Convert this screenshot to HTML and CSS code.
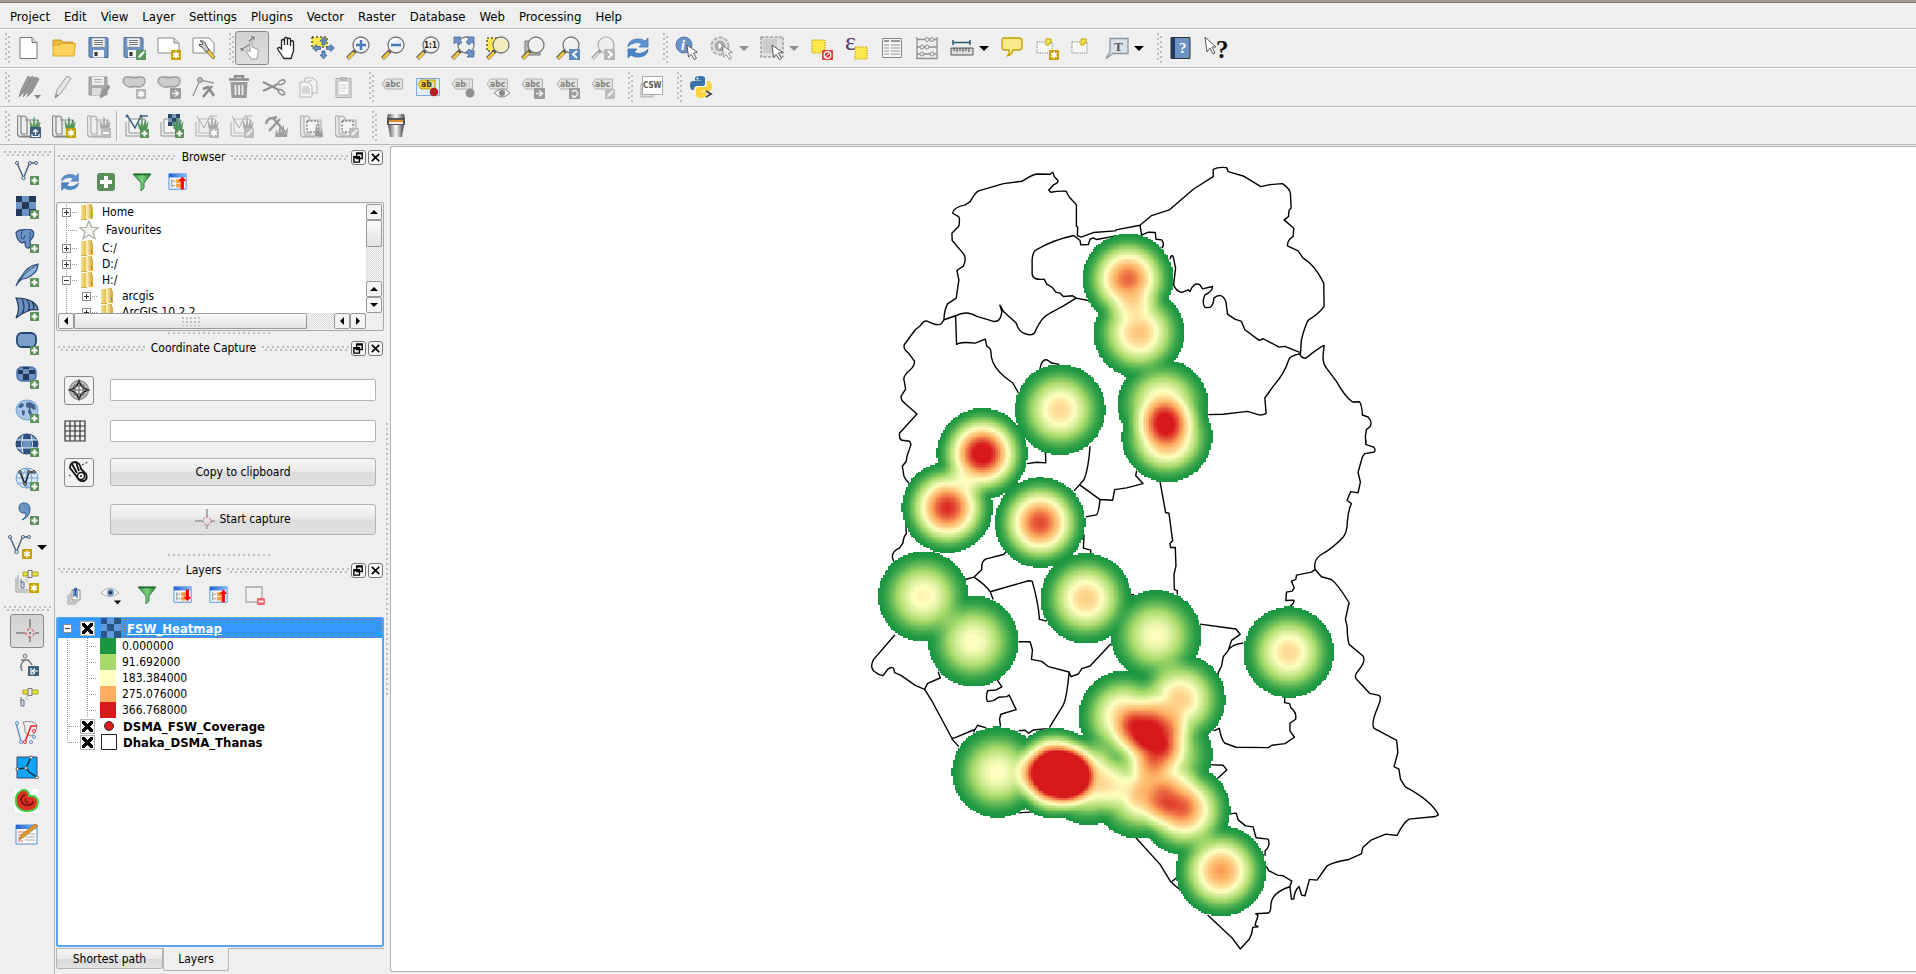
FILE: index.html
```html
<!DOCTYPE html>
<html lang="en">
<head>
  <meta charset="UTF-8" />
  <meta name="viewport" content="width=device-width, initial-scale=1.0" />
  <title>Dhaka DSMA Heatmap</title>
  <link rel="stylesheet" href="styles.css">
</head>
<body>

<!-- Shared icon shapes -->
<svg class="sprite" aria-hidden="true">
  <defs>
    <linearGradient id="gold" x1="0" x2="1"><stop offset="0" stop-color="#f5e294"/><stop offset=".45" stop-color="#e0bd4c"/><stop offset=".5" stop-color="#fff3b8"/><stop offset="1" stop-color="#d2a93c"/></linearGradient>
    <linearGradient id="green" x1="0" x2="1"><stop offset="0" stop-color="#2f9a41"/><stop offset=".5" stop-color="#7fd07f"/><stop offset="1" stop-color="#1d7f33"/></linearGradient>
    <linearGradient id="sky" x1="0" x2="1"><stop offset="0" stop-color="#1d5fd6"/><stop offset="1" stop-color="#8fc0f8"/></linearGradient>
    <linearGradient id="steel" x1="0" x2="1"><stop offset="0" stop-color="#555"/><stop offset=".5" stop-color="#fafafa"/><stop offset="1" stop-color="#444"/></linearGradient>
  </defs>
  <!-- badges -->
  <symbol id="b-plus" viewBox="0 0 24 24"><rect x="15" y="15" width="9" height="9" rx="1" fill="#5a8f5a"/><path d="M19.500 16.500v6M16.500 19.500h6" stroke="#fff" stroke-width="2"/></symbol>
  <symbol id="b-star" viewBox="0 0 24 24"><rect x="14" y="14" width="10" height="10" rx="1" fill="#c4a000"/><path d="M19 15.500v7M16 17.200l6 3.600M22 17.200l-6 3.600" stroke="#fff" stroke-width="1.600"/></symbol>
  <symbol id="b-star-off" viewBox="0 0 24 24"><rect x="14" y="14" width="10" height="10" rx="1" fill="#b5b5b5"/><path d="M19 15.500v7M16 17.200l6 3.600M22 17.200l-6 3.600" stroke="#fff" stroke-width="1.600"/></symbol>
  <symbol id="b-pen" viewBox="0 0 24 24"><rect x="14" y="14" width="10" height="10" rx="1" fill="#5a9360"/><path d="M16 22l1-3 5-4 1 1-4 5z" fill="#fff"/></symbol>
  <symbol id="b-pen-off" viewBox="0 0 24 24"><rect x="14" y="14" width="10" height="10" rx="1" fill="#bbb"/><path d="M16 22l1-3 5-4 1 1-4 5z" fill="#eee"/></symbol>
  <symbol id="b-right" viewBox="0 0 24 24"><rect x="13" y="13" width="11" height="11" rx="1" fill="#9b9b9b"/><path d="M15 18.500h6M18 15.500l3.500 3-3.500 3" stroke="#eee" stroke-width="1.600" fill="none"/></symbol>
  <!-- base shapes -->
  <symbol id="lens" viewBox="0 0 24 24"><path d="M10 14L1.500 22.500" stroke="#555" stroke-width="4"/><path d="M8 16.500L2 22.500" stroke="#f5c93c" stroke-width="2.500"/><circle cx="15" cy="9" r="8" fill="#eef0f0" stroke="#777" stroke-width="1.300"/><path d="M10 6a6 6 0 0 1 6-3" stroke="#fff" stroke-width="2" fill="none"/></symbol>
  <symbol id="lens-off" viewBox="0 0 24 24"><path d="M10 14L1.500 22.500" stroke="#999" stroke-width="3.500"/><path d="M8 16.500L2 22.500" stroke="#ddd" stroke-width="2"/><circle cx="15" cy="9" r="8" fill="#eee" stroke="#aaa" stroke-width="1.200"/></symbol>
  <symbol id="cursor" viewBox="0 0 24 24"><path d="M12 9l1.500 12 2.800-2.600 3 5.100 2.200-1.300-3-5 3.800-1z" fill="#fff" stroke="#555" stroke-width="1"/></symbol>
  <symbol id="floppy" viewBox="0 0 24 24"><path d="M2 1.500h18l1 1v19h-18l-1-1z" fill="#6c93c4" stroke="#4a6a96"/><path d="M5 2h13v9h-13z" fill="#f1f1ee" stroke="#999" stroke-width=".600"/><path d="M7 4.500h9M7 6.500h9M7 8.500h9" stroke="#777"/><path d="M6 14h11v7.500h-11z" fill="#f3f3f3"/><path d="M7.500 16h3v4h-3z" fill="#333"/></symbol>
  <symbol id="refresh" viewBox="0 0 24 24"><path d="M2 11q0-7 9-8 5-.500 8 2l3-3v9h-9l3-3q-4-3-8-1-4 1-6 4z" fill="#5d92d0" stroke="#3f73b4" stroke-width=".800"/><path d="M22 13q0 7-9 8-5 .500-8-2l-3 3v-9h9l-3 3q4 3 8 1 4-1 6-4z" fill="#4c84c5" stroke="#3f73b4" stroke-width=".800"/></symbol>
  <symbol id="tag" viewBox="0 0 24 24"><path d="M1 9l3.500-5h17v10h-17z" fill="#e2e2de" stroke="#b0b0b0"/><text x="4" y="12" font-size="8.500" font-weight="bold" fill="#808080">abc</text></symbol>
  <symbol id="vector" viewBox="0 0 24 24"><path d="M2 2l6.500 15 6-15h6" fill="none" stroke="#46627c" stroke-width="1.400"/><g fill="#e8f0f8" stroke="#46627c"><circle cx="2" cy="2" r="1.500"/><circle cx="8.500" cy="17" r="1.700"/><circle cx="15" cy="2" r="1.500"/><circle cx="21" cy="2" r="1.500"/></g></symbol>
  <symbol id="grass" viewBox="0 0 24 24"><path d="M14 15L13 7l3 6 1-10 1 10 3-7-1 7 3-5-1 7z" fill="#4f9a56" stroke="#3d8046" stroke-width=".500"/></symbol>
  <symbol id="grass-off" viewBox="0 0 24 24"><path d="M14 15L13 7l3 6 1-10 1 10 3-7-1 7 3-5-1 7z" fill="#aaa" stroke="#999" stroke-width=".500"/></symbol>
  <symbol id="scroll" viewBox="0 0 24 24"><path d="M4 3q-2.500-3-3.500 0v17q1 3 3.500 3h17v-17h-13M4 3q.500-1 3-1t3 3v15H6q-2 0-2-2zM4 22h11" fill="#e9e9e9" stroke="#858585" stroke-width="1.200"/></symbol>
  <symbol id="scroll-off" viewBox="0 0 24 24"><path d="M4 3q-2.500-3-3.500 0v17q1 3 3.500 3h17v-17h-13M4 3q.500-1 3-1t3 3v15H6q-2 0-2-2zM4 22h11" fill="#e9e9e9" stroke="#b0b0b0" stroke-width="1.200"/></symbol>
  <symbol id="sheets" viewBox="0 0 24 24"><path d="M4 5h16v14h-16z" fill="#f4f4f4" stroke="#8f8f8f"/><path d="M1 8v14h15" fill="none" stroke="#8f8f8f"/></symbol>
  <symbol id="sheets-off" viewBox="0 0 24 24"><path d="M4 5h16v14h-16z" fill="#eee" stroke="#bbb"/><path d="M1 8v14h15M2 2l7 12 6-12h7" fill="none" stroke="#aaa"/></symbol>
  <symbol id="raster" viewBox="0 0 24 24"><path d="M1 1h20v20h-20z" fill="#6c93c4"/><path d="M1 1h6v6h-6zM14 1h7v6h-7zM7 7h7v7h-7zM1 14h6v7h-6zM14 14h7v7h-7z" fill="#24395a"/></symbol>
  <symbol id="folder" viewBox="0 0 16 16"><path d="M2 1h5v14h-5zM7 0h6v15h-6z" fill="url(#gold)"/><path d="M13 3h1v12h-6v1h-6v-1h11z" fill="#d5ae45"/><path d="M12 9h1v4h-1z" fill="#4aa0e6"/></symbol>
  <symbol id="funnel" viewBox="0 0 20 20"><path d="M1 2h18l-7 9v5l-3 3v-8z" fill="url(#green)" stroke="#2c8340"/><path d="M2 2.500h16" stroke="#22662c" stroke-width="1.500"/></symbol>
  <symbol id="treewin" viewBox="0 0 22 20"><path d="M1 1h19v17h-19z" fill="#f6f6f6" stroke="#4c8ae0"/><path d="M1 1h19v4h-19z" fill="url(#sky)"/><path d="M4 7v9M4 9h4M4 14h4" stroke="#aaa" stroke-width="1.500"/><path d="M9 7h5v4h-5zM9 12h5v4h-5z" fill="#f39a3c"/></symbol>
  <symbol id="up-red" viewBox="0 0 22 20"><path d="M16 4l4 5h-2.500v9h-3.500v-9h-2.500z" fill="#f00"/></symbol>
  <symbol id="down-red" viewBox="0 0 22 20"><path d="M16 17l4-5h-2.500v-8h-3.500v8h-2.500z" fill="#f00"/></symbol>
  <symbol id="globe" viewBox="0 0 24 24"><ellipse cx="12" cy="11" rx="11" ry="10" fill="#dce9f8" stroke="#6f9fd4"/><path d="M1 11h22M3 6h18M3 16h18M12 1v20M12 1q-10 10 0 20M12 1q10 10 0 20" fill="none" stroke="#6f9fd4"/></symbol>
  <symbol id="sat" viewBox="0 0 24 24"><path d="M8 3h15v4h-15z" fill="#e8e337" stroke="#a8a22a"/><path d="M13 1.500h4v7h-4z" fill="#eee" stroke="#777"/><path d="M6 13h3v6h-3zM6 10v4" fill="#dde" stroke="#5b6f85"/><path d="M10 10q1 3 4 3M11 8q1 2 3 2" fill="none" stroke="#bbb"/></symbol>
  <symbol id="pin" viewBox="0 0 24 24"><path d="M2 6h15v11h-15z" fill="#f8f8f4" stroke="#666" stroke-dasharray="1 1.300"/><path d="M11 3h5v4h-2v2h-3z" fill="#fce94f" stroke="#c4a000"/></symbol>
  <symbol id="float" viewBox="0 0 14 14"><path d="M5 2h6v6h-6zM5 3h6M2 6h6v6h-6zM2 7h6" fill="#f4f4f4" stroke="#000" stroke-width="1.500"/></symbol>
  <symbol id="close" viewBox="0 0 14 14"><path d="M3 3l8 8M11 3l-8 8" stroke="#000" stroke-width="1.800"/></symbol>
</svg>

<div class="window">
  <div class="title-strip"></div>

  <nav class="menu-bar">
    <a href="#">Project</a>
    <a href="#">Edit</a>
    <a href="#">View</a>
    <a href="#">Layer</a>
    <a href="#">Settings</a>
    <a href="#">Plugins</a>
    <a href="#">Vector</a>
    <a href="#">Raster</a>
    <a href="#">Database</a>
    <a href="#">Web</a>
    <a href="#">Processing</a>
    <a href="#">Help</a>
  </nav>

  <div class="tool-row">
    <span class="grip"></span>
    <button class="tool" title="New"><svg viewBox="0 0 24 24"><path d="M3 1.500h12l5 5v16h-17z" fill="#fff" stroke="#777"/><path d="M15 1.500v5h5" fill="#ddd" stroke="#777"/></svg></button>
    <button class="tool" title="Open"><svg viewBox="0 0 24 24"><path d="M1 4h8l2 2h10v4h-20z" fill="#e9b93a" stroke="#c4962a"/><path d="M1 20V9h7l2-1.500h13.500L22 20z" fill="#fbd35c" stroke="#d9a52e"/></svg></button>
    <button class="tool" title="Save"><svg viewBox="0 0 24 24"><use href="#floppy"/></svg></button>
    <button class="tool" title="Save As"><svg viewBox="0 0 24 24"><use href="#floppy"/><use href="#b-pen"/></svg></button>
    <button class="tool" title="New Composer"><svg viewBox="0 0 24 24"><path d="M1 2h16l5 5v10h-21z" fill="#fff" stroke="#888"/><path d="M17 2v5h5" fill="#ddd" stroke="#888"/><use href="#b-star"/></svg></button>
    <button class="tool" title="Composer Manager"><svg viewBox="0 0 24 24"><path d="M1 2h16l5 5v10h-21z" fill="#fff" stroke="#888"/><path d="M16 12l7 9-2 2-8-9z" fill="#e5cf55" stroke="#8a7a33"/><path d="M8 5q5-1 6 4l3 5-3 2-4-5q-3 0-3-3l3 1 1-2z" fill="#ccc" stroke="#555"/></svg></button>
    <span class="grip"></span>
    <button class="tool active" title="Touch zoom"><svg viewBox="0 0 24 24"><path d="M10 12V4q1-1 2 0v7l5 2q2 1 1 4l-1 6h-6l-5-8q1-2 4 1z" fill="#fff" stroke="#999"/><path d="M2 13l7-4M9 5l5-4M1 12v2h3M11 1h3v3" stroke="#666" fill="none"/></svg></button>
    <button class="tool" title="Pan"><svg viewBox="0 0 24 24"><path d="M7 21L1.500 13q1-3 4 0V4.500q1.500-2 3 0V9 2.500q1.500-2 3 0V9 3q1.500-1.500 3 0v7V5.500q1.500-1.500 3 0V15l-2.500 7.500h-7z" fill="#fff" stroke="#222" stroke-width="1.300"/></svg></button>
    <button class="tool" title="Pan to selection"><svg viewBox="0 0 24 24"><path d="M1 1h15v10h-15z" fill="#fce94f" stroke="#111" stroke-dasharray="2 2"/><path d="M12.500 1l3.500 4h-2v4h-3v-4h-2zM12.500 23l3.500-4h-2v-4h-3v4h-2zM1.500 12l4-3.500v2h4v3h-4v2zM23.500 12l-4-3.500v2h-4v3h4v2z" fill="#6c93c4" stroke="#365f94" stroke-width=".800"/></svg></button>
    <button class="tool" title="Zoom In"><svg viewBox="0 0 24 24"><use href="#lens"/><path d="M15 4v10M10 9h10" stroke="#4a78b8" stroke-width="2.500"/></svg></button>
    <button class="tool" title="Zoom Out"><svg viewBox="0 0 24 24"><use href="#lens"/><path d="M10 9h10" stroke="#4a78b8" stroke-width="2.500"/></svg></button>
    <button class="tool" title="Native Resolution"><svg viewBox="0 0 24 24"><use href="#lens"/><text x="8" y="12" font-size="8" font-weight="bold" fill="#222">1:1</text></svg></button>
    <button class="tool" title="Zoom Full"><svg viewBox="0 0 24 24"><use href="#lens"/><path d="M3 1h7l-2 2 3 3-3 3-3-3-2 2zM23 1h-7l2 2-3 3 3 3 3-3 2 2zM23 21h-7l2-2-3-3 3-3 3 3 2-2z" fill="#6c93c4" stroke="#365f94" stroke-width=".700"/></svg></button>
    <button class="tool" title="Zoom to Selection"><svg viewBox="0 0 24 24"><path d="M1 2h15v13h-15z" fill="#fce94f" stroke="#111" stroke-dasharray="2 2"/><use href="#lens"/><circle cx="15" cy="9" r="7" fill="#f3ecc0"/></svg></button>
    <button class="tool" title="Zoom to Layer"><svg viewBox="0 0 24 24"><path d="M4 5h15v14h-15z" fill="#bbb" stroke="#777"/><use href="#lens"/></svg></button>
    <button class="tool" title="Zoom Last"><svg viewBox="0 0 24 24"><use href="#lens"/><path d="M13 13h11v11h-11z" fill="#5f88bb"/><path d="M21 15l-4 3.500 4 3.500" fill="none" stroke="#fff" stroke-width="2"/></svg></button>
    <button class="tool" title="Zoom Next"><svg viewBox="0 0 24 24"><use href="#lens-off"/><path d="M13 13h11v11h-11z" fill="#b5b5b5"/><path d="M17 15l4 3.500-4 3.500" fill="none" stroke="#fff" stroke-width="2"/></svg></button>
    <button class="tool" title="Refresh"><svg viewBox="0 0 24 24"><use href="#refresh"/></svg></button>
    <span class="grip"></span>
    <button class="tool" title="Identify"><svg viewBox="0 0 24 24"><circle cx="9" cy="9" r="8" fill="#6c93c4" stroke="#5079ac"/><text class="serif" x="6" y="14" font-size="14" font-style="italic" font-weight="bold" fill="#fff">i</text><use href="#cursor"/></svg></button>
    <button class="tool" title="Run Feature Action"><svg viewBox="0 0 24 24"><circle cx="10" cy="10" r="8.500" fill="#e4e4e4" stroke="#b0b0b0" stroke-width="2" stroke-dasharray="4 1.500"/><circle cx="10" cy="10" r="5.500" fill="#aaa"/><path d="M8.500 7l4.500 3-4.500 3z" fill="#fff"/><g opacity=".6"><use href="#cursor"/></g></svg></button>
    <button class="drop off" title="More actions"></button>
    <button class="tool" title="Select"><svg viewBox="0 0 24 24"><path d="M1 1h22v20h-22z" fill="#e0e0e0" stroke="#777" stroke-dasharray="3 1.500"/><path d="M3 3h14v14h-14z" fill="#ccc"/><use href="#cursor"/></svg></button>
    <button class="drop off" title="More selection"></button>
    <button class="tool" title="Deselect"><svg viewBox="0 0 24 24"><path d="M2 4h13v13h-13z" fill="#fce94f" stroke="#c4a000" stroke-dasharray="1.500 1"/><rect x="12" y="14" width="11" height="10" rx="1" fill="#e04040"/><circle cx="17.500" cy="19" r="3.300" fill="none" stroke="#fff" stroke-width="1.300"/><path d="M15 21.500l5-5" stroke="#fff"/></svg></button>
    <button class="tool" title="Select by Expression"><svg viewBox="0 0 24 24"><text class="serif" x="0" y="14" font-size="26" fill="#5c3566">ε</text><path d="M10 11h12v12h-12z" fill="#fce94f" stroke="#c4a000" stroke-dasharray="1.500 1"/></svg></button>
    <button class="tool" title="Attribute Table"><svg viewBox="0 0 24 24"><path d="M2.500 2.500h19v19h-19z" fill="#f4f4f4" stroke="#888"/><path d="M4 5h5M11 5h9" stroke="#999" stroke-width="2"/><path d="M4 9h5M4 12h5M4 15h5M4 18h5M11 9h9M11 12h9M11 15h9M11 18h9" stroke="#999" stroke-width="1.200"/></svg></button>
    <button class="tool" title="Statistics"><svg viewBox="0 0 24 24"><path d="M2 1v21M22 1v21M2 3.500h20M2 11h20M2 18h20M1 22.500h22" fill="none" stroke="#909090" stroke-width="1.300"/><g fill="#e8e8e8" stroke="#909090"><circle cx="12" cy="3.500" r="2"/><circle cx="17" cy="3.500" r="2"/><circle cx="7" cy="11" r="2"/><circle cx="12" cy="11" r="2"/><circle cx="7" cy="18" r="2"/><circle cx="17" cy="18" r="2"/></g></svg></button>
    <button class="tool" title="Measure"><svg viewBox="0 0 24 24"><path d="M3 4v5M20 4v5M3 6.500h17" stroke="#2f5870" stroke-width="1.500" fill="none"/><path d="M1 12h22v7h-22z" fill="#ddd" stroke="#555"/><path d="M4 12v3M7 12v4M10 12v3M13 12v4M16 12v3M19 12v4" stroke="#444"/></svg></button>
    <button class="drop" title="More measures"></button>
    <button class="tool" title="Map Tips"><svg viewBox="0 0 24 24"><path d="M4 2h15q3 0 3 3v6q0 3-3 3h-6q-1 5-6 6 3-2 2-6H5q-3 0-3-3V5q0-3 2-3z" fill="#f8e98a" stroke="#c4a000" stroke-width="1.300"/></svg></button>
    <button class="tool" title="New Bookmark"><svg viewBox="0 0 24 24"><use href="#pin"/><use href="#b-star"/></svg></button>
    <button class="tool" title="Show Bookmarks"><svg viewBox="0 0 24 24"><use href="#pin"/></svg></button>
    <button class="tool" title="Text Annotation"><svg viewBox="0 0 24 24"><path d="M5 2.500h18v15H8l-7 5 4-7z" fill="#d8e2ea" stroke="#8b96a0" stroke-width="1.300"/><text class="serif" x="9" y="14.500" font-size="13" font-weight="bold" fill="#555">T</text></svg></button>
    <button class="drop" title="More annotations"></button>
    <span class="grip"></span>
    <button class="tool" title="Help Contents"><svg viewBox="0 0 24 24"><path d="M2 1.500h19v21h-19z" fill="#6c93c4" stroke="#333"/><path d="M2 1.500h4v21h-4z" fill="#203a62"/><text class="serif" x="10" y="17" font-size="15" font-weight="bold" fill="#fff">?</text></svg></button>
    <button class="tool" title="What's This?"><svg viewBox="0 0 24 24"><path d="M1 1l2 15 3-4 3 6 2-1-3-6h4z" fill="#fff" stroke="#555"/><text class="serif" x="12" y="22" font-size="25" font-weight="bold" fill="#111">?</text></svg></button>
  </div>

  <div class="tool-row">
    <span class="grip"></span>
    <button class="tool" title="Current Edits"><svg viewBox="0 0 24 24"><path d="M2 22l2-7L11 1l3 2-7 14zM6 22l2-7L15 1l3 2-7 14zM10 22l2-6L19 2l3 2-7 13z" fill="#999" stroke="#888" stroke-width=".800"/><path d="M17 20h7l-3.500 4z" fill="#888"/></svg></button>
    <button class="tool" title="Toggle Editing"><svg viewBox="0 0 24 24"><path d="M3 23l2-8L15 1l4 2.500L9 18z" fill="#e6e6e6" stroke="#999"/><path d="M3 23l1-4 3 1.500z" fill="#888"/></svg></button>
    <button class="tool" title="Save Edits"><svg viewBox="0 0 24 24"><path d="M2 2h18v18h-18z" fill="#aaa" stroke="#999"/><path d="M5 2h12v8h-12z" fill="#eee"/><path d="M7 4.500h8M7 7h8" stroke="#aaa"/><path d="M5 13h9v7h-9z" fill="#ddd"/><path d="M13 23l1-5 7-8 2 2-6 9z" fill="#999" stroke="#888" stroke-width=".600"/></svg></button>
    <button class="tool" title="Add Feature"><svg viewBox="0 0 24 24"><path d="M1 7q0-6 6-5t10 0q6-1 6 4t-6 6q-4-1-8 0t-8-5z" fill="#ccc" stroke="#999" stroke-width="1.300"/><use href="#b-star-off"/></svg></button>
    <button class="tool" title="Move Feature"><svg viewBox="0 0 24 24"><path d="M1 7q0-6 6-5t10 0q6-1 6 4t-6 6q-4-1-8 0t-8-5z" fill="#ccc" stroke="#999" stroke-width="1.300"/><use href="#b-right"/></svg></button>
    <button class="tool" title="Node Tool"><svg viewBox="0 0 24 24"><path d="M1 21L8 5l14 3" stroke="#999" stroke-width="1.300" fill="none"/><circle cx="8" cy="5" r="2.500" fill="#bbb" stroke="#888"/><path d="M11 14l5-2 6 9M20 11l-9 11" stroke="#888" stroke-width="2.500" fill="none"/></svg></button>
    <button class="tool" title="Delete"><svg viewBox="0 0 24 24"><path d="M8 3V1h8v2M2 4.500h20" stroke="#8a8a8a" stroke-width="2.500" fill="none"/><path d="M3.500 7h17l-1 16h-15z" fill="#999"/><path d="M8.500 10v10M12 10v10M15.500 10v10" stroke="#eee" stroke-width="1.800"/></svg></button>
    <button class="tool" title="Cut"><svg viewBox="0 0 24 24"><path d="M1 7l16 8M1 16l15-7" stroke="#909090" stroke-width="2"/><ellipse cx="19.500" cy="7.500" rx="3.500" ry="2" fill="none" stroke="#909090" stroke-width="1.500" transform="rotate(-25 19 7)"/><ellipse cx="19.500" cy="17" rx="3.500" ry="2" fill="none" stroke="#909090" stroke-width="1.500" transform="rotate(35 19 17)"/></svg></button>
    <button class="tool" title="Copy"><svg viewBox="0 0 24 24"><path d="M8 3h8l4 4v11h-12z" fill="#f4f4f4" stroke="#b5b5b5"/><path d="M3 7h8l4 4v11h-12z" fill="#f4f4f4" stroke="#b5b5b5"/><path d="M5 12h7M5 14h8M5 16h8M5 18h8M11 6h4" stroke="#bbb"/></svg></button>
    <button class="tool" title="Paste"><svg viewBox="0 0 24 24"><path d="M4 3.500h15v19h-15z" fill="#ddd" stroke="#aaa"/><path d="M6 6h11v14h-11z" fill="#fafafa" stroke="#bbb"/><path d="M8 2h7v4h-7z" fill="#bbb"/><path d="M8 10h7M8 13h7M8 16h5" stroke="#ccc"/></svg></button>
    <span class="grip"></span>
    <button class="tool" title="Labeling"><svg viewBox="0 0 24 24"><use href="#tag"/></svg></button>
    <button class="tool" title="Highlight Pinned Labels"><svg viewBox="0 0 24 24"><path d="M.500 3.500h23v17h-23z" fill="#e3eefb" stroke="#7da9dc"/><path d="M2 9l3-4h14v9H5z" fill="#f2d640" stroke="#b79b1c"/><text x="5" y="12" font-size="8.500" font-weight="bold" fill="#333">ab</text><path d="M17 8v8" stroke="#ddd" stroke-width="2"/><circle cx="18" cy="17" r="4.300" fill="#b42121"/></svg></button>
    <button class="tool" title="Pin Labels"><svg viewBox="0 0 24 24"><use href="#tag"/><path d="M17 7v9" stroke="#ddd" stroke-width="3"/><circle cx="19" cy="18" r="4.500" fill="#909090"/></svg></button>
    <button class="tool" title="Show Labels"><svg viewBox="0 0 24 24"><use href="#tag"/><path d="M8 18q8-8 16 0-8 8-16 0z" fill="#f4f4f4" stroke="#888"/><circle cx="16" cy="18" r="3" fill="#888"/></svg></button>
    <button class="tool" title="Move Label"><svg viewBox="0 0 24 24"><use href="#tag"/><use href="#b-right"/></svg></button>
    <button class="tool" title="Rotate Label"><svg viewBox="0 0 24 24"><use href="#tag"/><path d="M13 13h11v11h-11z" fill="#9b9b9b"/><path d="M16 20a3 3 0 1 0 0-3M16 22h4" fill="none" stroke="#eee" stroke-width="1.500"/></svg></button>
    <button class="tool" title="Change Label"><svg viewBox="0 0 24 24"><use href="#tag"/><use href="#b-pen-off"/></svg></button>
    <span class="grip"></span>
    <button class="tool" title="MetaSearch"><svg viewBox="0 0 24 24"><path d="M1 8v14h12v-2" fill="#ddd" stroke="#aaa"/><path d="M2.500 1.500h20v18h-20z" fill="#fff" stroke="#aaa"/><text x="3" y="13" font-size="8" font-weight="bold" fill="#555">CSW</text></svg></button>
    <span class="grip"></span>
    <button class="tool" title="Python Console"><svg viewBox="0 0 24 24"><path d="M6 6V3q0-2 5-2t5 2v6q0 2-2 2H8q-3 0-3 4H3q-2-1-2-5 0-4 3-4h8V5.500H6z" fill="#3a74a8"/><path d="M18 6h2q3 1 3 6 0 4-3 4h-8v1h5v3q0 3-5 3t-5-3v-6q0-2 3-2h6q2 0 2-3z" fill="#fcd43c"/><circle cx="8.500" cy="3.500" r="1" fill="#fff"/><path d="M17 16l5 3-5 3" fill="none" stroke="#444" stroke-width="1.800"/></svg></button>
  </div>

  <div class="tool-row last">
    <span class="grip"></span>
    <button class="tool" title="Open Mapset"><svg viewBox="0 0 24 24"><use href="#scroll"/><use href="#grass"/><path d="M13 13h11v11h-11z" fill="#3c5f7c"/><path d="M18.500 21v-5M16 18l2.500-2.500 2.500 2.500M15 20v2.500h7v-2.500" fill="none" stroke="#fff" stroke-width="1.200"/></svg></button>
    <button class="tool" title="New Mapset"><svg viewBox="0 0 24 24"><use href="#scroll"/><use href="#grass"/><use href="#b-star"/></svg></button>
    <button class="tool" title="Close Mapset"><svg viewBox="0 0 24 24"><use href="#scroll-off"/><use href="#grass-off"/><path d="M14 14h10v10h-10z" fill="#bbb"/><path d="M16 19h6" stroke="#fff" stroke-width="2"/></svg></button>
    <span class="divider"></span>
    <button class="tool" title="Add GRASS Vector"><svg viewBox="0 0 24 24"><use href="#sheets"/><path d="M2 1l8 13 6-12h7" fill="none" stroke="#46627c" stroke-width="1.500"/><circle cx="2" cy="2" r="1.500" fill="#46627c"/><circle cx="16" cy="2" r="1.500" fill="#46627c"/><use href="#grass"/><use href="#b-plus"/></svg></button>
    <button class="tool" title="Add GRASS Raster"><svg viewBox="0 0 24 24"><use href="#sheets"/><path d="M8 0h12v12h-12z" fill="#7c97b5"/><path d="M8 0h4v4h-4zM16 0h4v4h-4zM12 4h4v4h-4zM8 8h4v4h-4z" fill="#2b4767"/><use href="#grass"/><use href="#b-plus"/></svg></button>
    <button class="tool" title="New GRASS Vector"><svg viewBox="0 0 24 24"><use href="#sheets-off"/><use href="#grass-off"/><use href="#b-star-off"/></svg></button>
    <button class="tool" title="Edit GRASS Vector"><svg viewBox="0 0 24 24"><use href="#sheets-off"/><use href="#grass-off"/><use href="#b-pen-off"/></svg></button>
    <button class="tool" title="GRASS Tools"><svg viewBox="0 0 24 24"><path d="M1 10q1-6 7-6l4-1M8 4l12 14M15 5L4 17" fill="none" stroke="#999" stroke-width="2.500"/><path d="M10 23l1-8 2 5 2-11 1 10 3-9v10l4-7-1 10z" fill="#a0a0a0"/></svg></button>
    <button class="tool" title="GRASS Region"><svg viewBox="0 0 24 24"><use href="#scroll-off"/><path d="M7 7h11v11h-11z" fill="#f4f4f4" stroke="#555" stroke-dasharray="2 1.500"/><path d="M15 22l1-13 2 10 1-12 1 13 2-6 1 9z" fill="#999"/></svg></button>
    <button class="tool" title="Edit GRASS Region"><svg viewBox="0 0 24 24"><use href="#scroll-off"/><path d="M7 7h11v11h-11z" fill="#f4f4f4" stroke="#555" stroke-dasharray="2 1.500"/><use href="#b-pen-off"/></svg></button>
    <span class="grip"></span>
    <button class="tool" title="Table Manager"><svg viewBox="0 0 24 24"><path d="M4 0h16l1 4h-18z" fill="url(#steel)"/><path d="M3 4h18v7h-18z" fill="#555"/><path d="M5 7h14v3h-14z" fill="#eee"/><path d="M5 6h14v2h-14z" fill="#e58a2c"/><path d="M4 11h16l-2 12h-12z" fill="url(#steel)"/></svg></button>
  </div>

  <div class="workspace">
    <div class="side-tools">
      <span class="grip-h"></span>
      <button class="tool" title="Add Vector Layer"><svg viewBox="0 0 24 24"><use href="#vector"/><use href="#b-plus"/></svg></button>
      <button class="tool" title="Add Raster Layer"><svg viewBox="0 0 24 24"><use href="#raster"/><use href="#b-plus"/></svg></button>
      <button class="tool" title="Add PostGIS Layer"><svg viewBox="0 0 24 24"><path d="M1 4q2-4 7-3 4-2 8 0 4 1 2 7l-3 4q1 6-1 7-4 1-4-6-1 0-3 1-5-2-6-10z" fill="#6c93c4" stroke="#2f4f7c" stroke-width="1.300"/><path d="M7 2q-2 4 0 8 3 0 3-4M15 3q1 4-1 7" fill="none" stroke="#2f4f7c"/><use href="#b-plus"/></svg></button>
      <button class="tool" title="Add SpatiaLite Layer"><svg viewBox="0 0 24 24"><path d="M1 23q2-6 6-10Q12 3 23 1q0 7-6 11-5 4-10 4-4 3-6 7z" fill="#8fb2dc" stroke="#2f4f7c" stroke-width="1.200"/><path d="M5 17Q10 9 22 2" fill="none" stroke="#2f4f7c"/><use href="#b-plus"/></svg></button>
      <button class="tool" title="Add MSSQL Layer"><svg viewBox="0 0 24 24"><path d="M1 1q10 0 17 4 5 4 5 8-6-1-10 1-6 2-12 7 5-10 0-20z" fill="#6c93c4" stroke="#24395a" stroke-width="1.200"/><path d="M7 2q4 8 0 15M12 3q4 6 1 11M17 5q3 4 1 8" fill="none" stroke="#24395a" stroke-width="1.300"/><use href="#b-plus"/></svg></button>
      <button class="tool" title="Add Oracle Layer"><svg viewBox="0 0 24 24"><rect x="2" y="2" width="19" height="14" rx="5" fill="#7d9fcc" stroke="#24456f" stroke-width="1.800"/><use href="#b-plus"/></svg></button>
      <button class="tool" title="Add Oracle Raster"><svg viewBox="0 0 24 24"><rect x="2" y="2" width="19" height="14" rx="5" fill="#6c93c4" stroke="#4b74aa" stroke-width="1.500"/><path d="M3 5h5v4h-5zM14 5h6v4h-6zM8 9h6v6h-6zM8 2h6v2h-6z" fill="#24395a"/><use href="#b-plus"/></svg></button>
      <button class="tool" title="Add WMS Layer"><svg viewBox="0 0 24 24"><ellipse cx="12" cy="11" rx="11" ry="10" fill="#aac5e6" stroke="#6f9fd4"/><path d="M3 8l3-4 3 1-1 3-3 1zM7 11l3 1-1 5-2-2zM11 4l4-1 5 3 1 4-3 1-1-2-2 1 2 4-2 3-2-4 1-4-3-1z" fill="#3f628f"/><use href="#b-plus"/></svg></button>
      <button class="tool" title="Add WCS Layer"><svg viewBox="0 0 24 24"><ellipse cx="12" cy="11" rx="11" ry="10" fill="#6c93c4" stroke="#24395a"/><path d="M2 7h6v7h-6zM16 7h6v7h-6zM8 1h8v5h-8zM8 15h8v5h-8z" fill="#2d5080"/><path d="M1 7h22M1 15h22M8 2q-3 9 0 18M16 2q3 9 0 18" fill="none" stroke="#e6effa"/><use href="#b-plus"/></svg></button>
      <button class="tool" title="Add WFS Layer"><svg viewBox="0 0 24 24"><use href="#globe"/><path d="M5 5l5 12 4-12h6" fill="none" stroke="#222" stroke-width="1.500"/><g fill="#fff" stroke="#222"><circle cx="5" cy="5" r="1.300"/><circle cx="10" cy="17" r="1.300"/><circle cx="14" cy="5" r="1.300"/><circle cx="19" cy="5" r="1.300"/></g><use href="#b-plus"/></svg></button>
      <button class="tool" title="Add Delimited Text"><svg viewBox="0 0 24 24"><path d="M7 19q5-3 4-7-7 1-7-5 0-5 5-5 6 0 6 6 0 8-8 11z" fill="#6c93c4" stroke="#365f94"/><use href="#b-plus"/></svg></button>
      <span class="with-drop"><button class="tool" title="New Vector Layer"><svg viewBox="0 0 24 24"><use href="#vector"/><use href="#b-star"/></svg></button><button class="drop" title="More layer types"></button></span>
      <button class="tool" title="GPS Tools"><svg viewBox="0 0 24 24"><path d="M3 6v15h12M1 9v14h12" fill="none" stroke="#999"/><use href="#sat"/><use href="#b-star"/></svg></button>
      <span class="grip-h"></span>
      <button class="tool active" title="Coordinate Capture"><svg viewBox="0 0 24 24"><path d="M15 0v9M15 18v5M1 14h9M20 14h4M15 13v2M14 14h2" stroke="#555"/><circle cx="15" cy="14" r="4" fill="none" stroke="#d33" stroke-dasharray="3 2"/></svg></button>
      <button class="tool" title="eVis"><svg viewBox="0 0 24 24"><path d="M10 7q-6 4-3 11M13 7q3 3 4 5M6 7h8" fill="none" stroke="#777" stroke-width="1.500"/><circle cx="10" cy="3" r="2" fill="#ddd" stroke="#777"/><rect x="13" y="13" width="11" height="10" rx="1" fill="#3c5f7c"/><path d="M16 15v6h3M23 18h-5M20 15.500l-2.500 2.500 2.500 2.500" fill="none" stroke="#fff" stroke-width="1.200"/></svg></button>
      <button class="tool" title="GPS Information"><svg viewBox="0 0 24 24"><use href="#sat"/></svg></button>
      <button class="tool" title="Offline Editing"><svg viewBox="0 0 24 24"><path d="M1 2l5 18 2 2" fill="none" stroke="#6c93c4" stroke-width="1.500"/><path d="M8 1q10-2 14 3-1 9-6 11-8-2-6-9z" fill="#eee" stroke="#888"/><path d="M10 21l6-16h6M11 20h-2" fill="none" stroke="#e22" stroke-width="1.500"/><g fill="#fff" stroke="#5b8ac6"><circle cx="2" cy="2" r="1.500"/><circle cx="6" cy="21" r="1.500"/><circle cx="16" cy="21" r="1.500"/><circle cx="19" cy="16" r="1.500"/></g><circle cx="10" cy="21" r="1.500" fill="#fff" stroke="#e22"/><circle cx="19" cy="10" r="1.500" fill="#fff" stroke="#e22"/></svg></button>
      <button class="tool" title="Topology Checker"><svg viewBox="0 0 24 24"><path d="M2 2h20v21h-20z" fill="#0ba6f7" stroke="#446"/><path d="M3 14l8-1 5-11M11 13l3 4 9 6" fill="none" stroke="#123" stroke-width="1.300"/><g fill="#fff" stroke="#555"><circle cx="2.500" cy="14" r="1.500"/><circle cx="11" cy="13" r="1.500"/><circle cx="16" cy="2.500" r="1.500"/><circle cx="22" cy="22.500" r="1.500"/></g></svg></button>
      <button class="tool" title="Heatmap"><svg viewBox="0 0 24 24"><path d="M0 0h24v24h-24z" fill="#fff"/><path d="M7 1q7-1 7 6 8-1 9 6 0 8-9 9-8 1-12-5-4-11 5-16z" fill="#df2f24" stroke="#45cf45" stroke-width="2"/><path d="M10 6q-4 1-4 5 2 6 7 5 5 0 5-4M11 10q-2 2 2 4" fill="none" stroke="#6b120e" stroke-width="1.500"/></svg></button>
      <button class="tool" title="Notes"><svg viewBox="0 0 24 24"><path d="M1 2h21v19h-21z" fill="#fbfbfb" stroke="#5a8ad0"/><path d="M1 2h21v4h-21z" fill="url(#sky)"/><path d="M3 9h8M3 12h5M3 15h4M3 18h5" stroke="#e66"/><path d="M13 11h7M11 14h9M10 17h10" stroke="#aaa"/><path d="M4 17l2-5L20 1l3 2L9 14z" fill="#dc9a2f" stroke="#a8701c" stroke-width=".700"/></svg></button>
    </div>

    <div class="docks">
      <section class="panel">
        <header class="panel-title">
          <span class="grip-h"></span><h2>Browser</h2><span class="grip-h"></span>
          <button title="Float"><svg viewBox="0 0 14 14"><use href="#float"/></svg></button>
          <button title="Close"><svg viewBox="0 0 14 14"><use href="#close"/></svg></button>
        </header>
        <div class="panel-tools">
          <button title="Refresh"><svg viewBox="0 0 24 24"><use href="#refresh"/></svg></button>
          <button title="Add"><svg viewBox="0 0 20 20"><rect x="1" y="1" width="18" height="18" rx="3" fill="#5a8f5a"/><path d="M10 4v12M4 10h12" stroke="#fff" stroke-width="4"/></svg></button>
          <button title="Filter"><svg viewBox="0 0 20 20"><use href="#funnel"/></svg></button>
          <button title="Collapse"><svg viewBox="0 0 22 20"><use href="#treewin"/><use href="#up-red"/></svg></button>
        </div>
        <div class="browser-box">
          <ul class="tree browser-tree">
            <li><button class="twist plus"></button><i></i><svg viewBox="0 0 16 16"><use href="#folder"/></svg><span>Home</span></li>
            <li class="fav"><b></b><i></i><svg viewBox="0 0 20 20"><path d="M10 1l2.700 6.300 6.300.400-5 4.300 2 6.500-6-3.500-6 3.500 2-6.500-5-4.300 6.300-.400z" fill="#f3f3ef" stroke="#a9b3a9" stroke-width="1.300"/></svg><span>Favourites</span></li>
            <li><button class="twist plus"></button><i></i><svg viewBox="0 0 16 16"><use href="#folder"/></svg><span>C:/</span></li>
            <li><button class="twist plus"></button><i></i><svg viewBox="0 0 16 16"><use href="#folder"/></svg><span>D:/</span></li>
            <li><button class="twist"></button><i></i><svg viewBox="0 0 16 16"><use href="#folder"/></svg><span>H:/</span></li>
            <li class="child"><button class="twist plus"></button><i></i><svg viewBox="0 0 16 16"><use href="#folder"/></svg><span>arcgis</span></li>
            <li class="child"><button class="twist plus"></button><i></i><svg viewBox="0 0 16 16"><use href="#folder"/></svg><span>ArcGIS 10.2.2</span></li>
          </ul>
          <div class="scroll-v">
            <button class="up" title="Scroll up"></button><span class="thumb"></span><span class="trough"></span>
            <button class="up" title="Scroll up"></button><button class="down" title="Scroll down"></button>
          </div>
          <div class="scroll-h">
            <button class="left" title="Scroll left"></button><span class="thumb"></span><span class="trough"></span>
            <button class="left" title="Scroll left"></button><button class="right" title="Scroll right"></button>
          </div>
        </div>
      </section>

      <span class="splitter"></span>

      <section class="panel">
        <header class="panel-title">
          <span class="grip-h"></span><h2>Coordinate Capture</h2><span class="grip-h"></span>
          <button title="Float"><svg viewBox="0 0 14 14"><use href="#float"/></svg></button>
          <button title="Close"><svg viewBox="0 0 14 14"><use href="#close"/></svg></button>
        </header>
        <form class="capture" onsubmit="event.preventDefault()">
          <button class="square" type="button" title="Coordinate system"><svg viewBox="0 0 22 22"><circle cx="11" cy="11" r="9.500" fill="#bbb" stroke="#777"/><path d="M11 2q2 7 9 9-7 2-9 9-2-7-9-9 7-2 9-9z" fill="#eee" stroke="#111" stroke-width="1.500"/><path d="M1 11h20M11 1v20M5 7h12M5 15h12M7 5v12M15 5v12" stroke="#666" fill="none"/></svg></button>
          <input type="text" aria-label="Geographic coordinate">
          <span class="grid-icon"><svg viewBox="0 0 22 22"><path d="M1 1h20v20h-20zM1 6h20M1 11h20M1 16h20M6 1v20M11 1v20M16 1v20" fill="none" stroke="#333" stroke-width="1.200"/></svg></span>
          <input type="text" aria-label="Map coordinate">
          <button class="square" type="button" title="Track mouse"><svg viewBox="0 0 22 22"><path d="M2 7q0-6 6-6 4 1 5 7l5 5q2 5-2 7-5 1-7-4z" fill="#f4f4f4" stroke="#111" stroke-width="1.800"/><path d="M4 3l5 9M8 1l3 9" stroke="#111" stroke-width="1.800"/><circle cx="13" cy="15" r="3.500" fill="#fff" stroke="#111" stroke-width="1.500"/><circle cx="13" cy="15" r="1" fill="#111"/><path d="M14 4l6-3M1 14l3 2" stroke="#111" stroke-dasharray="2 2"/></svg></button>
          <button class="push" type="button">Copy to clipboard</button>
          <span></span>
          <button class="push tall" type="submit"><svg viewBox="0 0 20 20"><path d="M12 0v8M12 16v4M0 12h8M16 12h4" stroke="#999" stroke-width="1.500"/><circle cx="12" cy="12" r="4" fill="none" stroke="#c55" stroke-dasharray="2 1.500"/></svg>Start capture</button>
        </form>
      </section>

      <span class="splitter"></span>

      <section class="panel layers">
        <header class="panel-title">
          <span class="grip-h"></span><h2>Layers</h2><span class="grip-h"></span>
          <button title="Float"><svg viewBox="0 0 14 14"><use href="#float"/></svg></button>
          <button title="Close"><svg viewBox="0 0 14 14"><use href="#close"/></svg></button>
        </header>
        <div class="panel-tools">
          <button title="Add Group"><svg viewBox="0 0 20 20"><path d="M7 5h8v10h-8z" fill="#fafafa" stroke="#888"/><path d="M5 8v9h8M3 10v9h8" fill="none" stroke="#999"/><path d="M9 12V5q2-4 3 0v8M10.500 4v7" fill="none" stroke="#2f5f9c" stroke-width="1.200"/></svg></button>
          <button title="Visibility"><svg viewBox="0 0 20 20"><path d="M0 8q9-10 18 0-9 7-18 0z" fill="#f8f8f8" stroke="#aaa"/><circle cx="9.500" cy="7.500" r="3.500" fill="#6c93c4"/><circle cx="9.500" cy="7.500" r="1.500" fill="#223"/><path d="M13 15.500h7l-3.500 4z" fill="#000"/></svg></button>
          <button title="Filter Legend"><svg viewBox="0 0 20 20"><use href="#funnel"/></svg></button>
          <button title="Expand All"><svg viewBox="0 0 22 20"><use href="#treewin"/><use href="#down-red"/></svg></button>
          <button title="Collapse All"><svg viewBox="0 0 22 20"><use href="#treewin"/><use href="#up-red"/></svg></button>
          <button title="Remove Layer"><svg viewBox="0 0 20 20"><path d="M1 2h16v15h-16z" fill="#f2f2f2" stroke="#aaa" stroke-width="1.300"/><rect x="12" y="13" width="8" height="7" rx="1" fill="#ee6a6a"/><path d="M13.500 16.500h5" stroke="#fff" stroke-width="1.800"/></svg></button>
        </div>
        <div class="layer-box">
          <ul class="tree layer-tree">
            <li class="selected"><button class="twist"></button><i></i><input type="checkbox" id="heat" checked><svg viewBox="1 1 20 20"><path d="M1 1h20v20h-20z" fill="#5f9ade"/><path d="M1 1h6v6h-6zM14 1h7v6h-7zM7 7h7v7h-7zM1 14h6v7h-6zM14 14h7v7h-7z" fill="#2a5688"/></svg><label for="heat">FSW_Heatmap</label></li>
            <li class="class"><i></i><em class="c0"></em><span>0.000000</span></li>
            <li class="class"><i></i><em class="c1"></em><span>91.692000</span></li>
            <li class="class"><i></i><em class="c2"></em><span>183.384000</span></li>
            <li class="class"><i></i><em class="c3"></em><span>275.076000</span></li>
            <li class="class"><i></i><em class="c4"></em><span>366.768000</span></li>
            <li class="layer"><b></b><i></i><input type="checkbox" id="cover" checked><svg viewBox="0 0 16 16"><circle cx="8" cy="8" r="4.500" fill="#e31a1c" stroke="#333"/></svg><label for="cover">DSMA_FSW_Coverage</label></li>
            <li class="layer"><b></b><i></i><input type="checkbox" id="thanas" checked><svg viewBox="0 0 16 16"><path d="M.500 .500h15v15h-15z" fill="#fff" stroke="#222"/></svg><label for="thanas">Dhaka_DSMA_Thanas</label></li>
          </ul>
        </div>
        <div class="tabs">
          <button>Shortest path</button>
          <button class="current">Layers</button>
        </div>
      </section>
    </div>

    <span class="splitter-v"></span>

    <main class="map">
      <svg class="boundaries" viewBox="391 147 1525 825">
        <!-- north sheet -->
        <g transform="translate(860 150) scale(.3333)">
          <path d="M663 262L652 257 653 232 649 228 649 165Q645 158 640 155L628 142 618 124Q600 122 572 127L566 120 580 105Q598 98 592 90L583 80 578 67 570 73 530 72Q515 75 485 94L430 101 355 123Q345 128 330 155L315 165Q280 172 277 190L295 200Q300 205 296 228L275 250 276 272 310 312Q320 325 310 348L290 362 296 390 288 445 262 462Q252 480 251 510L243 522Q232 530 200 514 190 512 180 528L165 540Q150 560 132 585 128 600 145 610L163 635Q162 650 150 660 125 680 132 695L136 718 122 740Q122 753 135 762L170 793 118 850Q115 868 125 872L148 875 152 885 140 920 138 935 126 950 131 980Q135 990 147 1003"/>
          <path d="M251 510L286 498Q320 480 350 500L400 515Q422 518 425 485L419 466 430 485 468 520Q475 545 495 552 520 560 525 545 545 500 570 490L610 468 648 445 685 452"/>
          <path d="M286 498L289 584Q300 575 345 580L375 568 380 590Q390 593 392 605 392 620 398 637 412 670 458 700L475 730"/>
          <path d="M648 445L638 438 610 440 600 430 587 427 577 413 560 403 552 388Q517 392 516 372L516 330Q518 305 528 300 580 270 641 257L660 272 662 285 685 284 690 268 700 264 710 269 768 258"/>
          <path d="M663 262L700 248 765 243 768 240 840 226 875 197 928 180 1000 118 1060 80 1060 58Q1075 50 1100 53L1105 65 1150 78 1203 110 1230 104 1268 101Q1292 118 1292 132L1294 175 1288 180 1286 200 1273 210 1302 235 1300 260Q1282 270 1283 288L1315 303 1330 325Q1365 345 1392 400L1393 470Q1380 490 1345 512 1335 530 1325 570L1322 612"/>
          <path d="M840 226L845 256 865 247 886 248 888 268 905 270Q916 285 905 294M930 328Q935 310 940 322L947 355 941 405Q948 425 966 428L985 420 990 425Q1002 395 1020 405L1028 417 1058 410Q1058 425 1035 435 1025 460 1035 472 1060 480 1062 445 1085 425 1098 455L1103 493 1125 508 1145 515 1155 540 1198 572 1210 567 1258 592 1275 590 1320 608M1322 612Q1290 618 1287 630 1275 670 1240 710L1215 745 1219 792Q1205 798 1195 795L1163 785 1090 794 1045 795"/>
          <path d="M540 655Q545 628 560 630L575 640 598 644M500 942L530 938 557 940 556 908M690 890Q685 960 672 990L658 1006 642 1024"/>
        </g>
        <!-- east edge -->
        <g transform="translate(1290 330) scale(.3333)">
          <path d="M30 72Q35 88 50 84L70 68Q95 50 103 47L100 75Q98 100 110 115L140 155Q165 200 188 217L208 216Q216 220 218 256L235 262Q248 275 242 290L230 300 227 320 228 340"/>
        </g>
        <!-- western thanas -->
        <g transform="translate(860 440) scale(.3333)">
          <path d="M137 255L138 283Q130 290 128 310L118 325Q95 335 96 352L101 370M104 586L40 660Q28 680 40 695L55 705 68 709 83 689Q95 680 100 688L103 700 122 708 165 738 193 750 215 785 275 897 285 895 345 870 352 858 378 866M193 750L202 732 240 716 234 697M342 870V880"/>
          <path d="M315 420L341 413 365 390Q362 365 378 358L430 345 437 338M341 413Q375 435 390 457L399 480M390 457L505 424 516 425Q535 490 538 540L560 545M475 607H510L517 632 514 660 545 666 565 682 627 698 633 712 655 704 665 688 690 680 752 614M627 698Q620 780 608 800L580 845 568 865M410 720L425 743 408 752 383 754Q375 770 382 787L400 784 415 774 440 772 447 767 468 811 422 825 418 840 421 860M475 874L495 873 505 882 520 872 560 868M672 285L670 326 692 332V345M658 135L720 180 758 182 764 150 800 145 849 132 827 108 830 93M720 180Q715 225 708 226L677 232M810 466H822"/>
        </g>
        <!-- eastern thanas -->
        <g transform="translate(1080 440) scale(.3333)">
          <path d="M240 125L257 219 267 221 278 304 270 312 272 324H286L288 380 282 405 283 450 292 454V465M858 0V14L883 23Q890 35 880 38L855 42 848 52 835 98 842 128 835 160 813 156 802 182 815 192Q805 215 803 245 802 280 790 293 760 325 725 345 700 360 706 390L695 398 650 407 648 420 635 425 643 445 637 455 620 458 618 483 642 482Q645 495 620 506M706 390L725 412 755 420Q775 435 808 490L797 540 802 560Q803 600 808 615L850 650Q860 665 835 695 822 708 830 720M360 554L440 565 468 569 481 585 455 603 445 633M490 611Q450 615 440 640L430 652 425 680 415 700 414 715"/>
        </g>
        <!-- south sheet -->
        <g transform="translate(860 680) scale(.3763 .3333)">
          <path d="M243 178L262 202M420 401L459 398M733 476L797 555 825 607 848 630M829 607L840 597M924 708L990 778 1011 810 1035 780Q1043 765 1044 745L1058 743 1050 738 1058 710 1052 704 1085 702Q1093 698 1092 680 1093 640 1143 623L1147 660 1153 660Q1155 635 1167 622L1174 648 1183 650 1195 601 1215 603 1242 560Q1260 548 1300 541L1333 524 1337 505 1360 482 1398 465 1428 469Q1445 430 1460 420L1530 412 1538 407Q1520 365 1450 323L1437 300 1433 270 1420 262 1430 220 1427 183 1367 147Q1357 135 1378 80 1388 55 1380 48L1355 42 1320 0M940 155L955 147Q960 180 970 192L1000 204 1085 205 1095 198 1130 193 1155 174 1143 155V132L1158 120Q1162 100 1145 85L1142 73 1129 70V54M929 256L965 258 975 272 950 298M982 404L1000 402 1005 422 1025 440 1045 443 1053 476 1085 480Q1092 500 1077 515V530M1080 562L1087 575 1110 588 1125 590 1148 606 1143 623"/>
        </g>
      </svg>
      <canvas id="heatmap" width="915" height="495"></canvas>
    </main>
  </div>
</div>

<script src="heatmap.js"></script>
</body>
</html>
```
FILE: styles.css
```css
* {
  margin: 0;
  padding: 0;
  box-sizing: border-box;
}

body {
  font-family: "DejaVu Sans Condensed", "DejaVu Sans", "Noto Sans", sans-serif;
  font-size: 12px;
  color: #000;
  background: #efefef;
  overflow: hidden;
}

button,
input {
  font: inherit;
  color: inherit;
}

button {
  border: none;
  background: none;
}

.sprite {
  position: absolute;
  width: 0;
  height: 0;
}

.window {
  display: flex;
  flex-direction: column;
  height: 100vh;
}

.title-strip {
  height: 3px;
  background: #a89690;
  border-bottom: 1px solid #85726d;
}

/* Menu */
.menu-bar {
  display: flex;
  gap: 14px;
  height: 26px;
  padding: 0 10px;
  font-size: 13px;
  line-height: 27px;
  border-bottom: 1px solid #b9b9b9;
}

.menu-bar a {
  color: #000;
  text-decoration: none;
}

/* Toolbars */
.tool-row {
  display: flex;
  align-items: center;
  height: 39px;
  padding-bottom: 1px;
  border-top: 1px solid #fafafa;
  border-bottom: 1px solid #b9b9b9;
}

.tool-row.last {
  height: 38px;
}

.tool {
  display: flex;
  align-items: center;
  justify-content: center;
  flex: none;
  width: 35px;
  height: 34px;
}

.tool svg {
  width: 24px;
  height: 24px;
}

.tool.active {
  width: 34px;
  margin-right: 1px;
  background: linear-gradient(#d2d2d2, #dedede);
  border: 1px solid #8a8a8a;
  border-radius: 3px;
}

.grip {
  flex: none;
  width: 6px;
  height: 30px;
  margin: 0 0 0 8px;
  background-image:
    radial-gradient(circle at 1px 1px, #bdbdbd 1px, transparent 1px),
    radial-gradient(circle at 4px 4px, #bdbdbd 1px, transparent 1px);
  background-size: 6px 5px;
}

.grip:first-child {
  margin-left: 5px;
}

.grip-h {
  height: 5px;
  background-image:
    radial-gradient(circle at 1px 1px, #bdbdbd 1px, transparent 1px),
    radial-gradient(circle at 4px 4px, #bdbdbd 1px, transparent 1px);
  background-size: 5px 5px;
}

.divider {
  width: 3px;
  height: 30px;
  border-left: 1px solid #b5b5b5;
  border-right: 1px solid #fff;
}

.drop {
  display: flex;
  align-items: center;
  flex: none;
  width: 15px;
  height: 20px;
}

.drop::before {
  content: "";
  border: 5px solid transparent;
  border-top-color: #000;
  border-bottom: 0;
}

.drop.off::before {
  border-top-color: #8f8f8f;
}

/* Workspace */
.workspace {
  display: flex;
  flex: 1;
  min-height: 0;
}

.side-tools {
  display: flex;
  flex-direction: column;
  align-items: center;
  flex: none;
  width: 55px;
  padding-top: 6px;
  border-right: 1px solid #b9b9b9;
}

.side-tools .grip-h {
  flex: none;
  width: 47px;
}

.side-tools .tool + .grip-h {
  margin: 8px 0 3px;
}

.with-drop {
  display: flex;
  align-items: center;
}

.docks {
  display: flex;
  flex-direction: column;
  flex: none;
  width: 330px;
  padding: 1px 1px 2px;
}

.panel-title {
  display: flex;
  align-items: center;
  gap: 2px;
  height: 22px;
  padding: 0 1px 0 2px;
}

.panel-title h2 {
  margin: 0 4px;
  font-size: 12px;
  font-weight: normal;
}

.panel-title .grip-h {
  flex: 1;
}

.panel-title button {
  width: 15px;
  height: 15px;
  background: #f8f8f8;
  border: 1px solid #777;
  border-radius: 3px;
}

.panel-title button svg {
  display: block;
  width: 13px;
  height: 13px;
}

.panel-tools {
  display: flex;
  gap: 16px;
  height: 34px;
  padding: 4px;
}

.panel-tools button {
  width: 20px;
  height: 20px;
}

.panel-tools svg {
  display: block;
  width: 20px;
  height: 20px;
}

/* Browser tree */
.browser-box {
  display: grid;
  grid-template: 109px 16px / 1fr 16px;
  height: 129px;
  padding: 1px;
  border: 1px solid #a8a8a8;
  border-radius: 2px;
}

.tree {
  list-style: none;
  overflow: hidden;
  background: #fff;
}

.tree li {
  display: flex;
  align-items: center;
  height: 16px;
  white-space: nowrap;
}

.tree i {
  width: 5px;
  margin: 0 2px 0 1px;
  border-top: 1px dotted #999;
}

.tree b {
  width: 5px;
  margin-left: 4px;
  border-top: 1px dotted #999;
}

.tree svg {
  flex: none;
}

.twist {
  flex: none;
  width: 9px;
  height: 9px;
  border: 1px solid #8c8c8c;
  background: linear-gradient(#333, #333) center / 5px 1px no-repeat #fff;
}

.twist.plus {
  background: linear-gradient(#333, #333) center / 5px 1px no-repeat,
    linear-gradient(#333, #333) center / 1px 5px no-repeat, #fff;
}

.browser-tree {
  padding-left: 4px;
  background: repeating-linear-gradient(#999 0 1px, #fff 1px 2px) 8px 0 / 1px 100% no-repeat #fff;
}

.browser-tree svg {
  width: 16px;
  height: 16px;
  margin-right: 6px;
}

.browser-tree span {
  padding-left: 1px;
}

.browser-tree .fav {
  height: 20px;
}

.browser-tree .fav svg {
  width: 20px;
  height: 20px;
}

.browser-tree .child {
  padding-left: 20px;
}

.scroll-v,
.scroll-h {
  display: flex;
  background: repeating-conic-gradient(#dcdcdc 0 25%, #f4f4f4 0 50%) 0 0 / 2px 2px;
}

.scroll-v {
  flex-direction: column;
}

.scroll-v button,
.scroll-h button {
  display: flex;
  align-items: center;
  justify-content: center;
  flex: none;
  width: 16px;
  height: 16px;
  background: #f4f4f4;
  border: 1px solid #9a9a9a;
  border-radius: 2px;
}

.trough {
  flex: 1;
}

.thumb {
  flex: none;
  background: linear-gradient(#fafafa, #e2e2e2);
  border: 1px solid #9a9a9a;
  border-radius: 1px;
}

.scroll-v .thumb {
  height: 27px;
}

.scroll-h .thumb {
  flex: 0 0 233px;
  padding: 2px 106px;
  background: radial-gradient(circle, #c0c0c0 1px, transparent 1px) 0 0 / 4px 4px content-box,
    linear-gradient(#fafafa, #e2e2e2);
}

.up::before,
.down::before,
.left::before,
.right::before {
  content: "";
  border: 4px solid transparent;
}

.up::before {
  border-bottom-color: #000;
  border-top: 0;
}

.down::before {
  border-top-color: #000;
  border-bottom: 0;
}

.left::before {
  border-right-color: #000;
  border-left: 0;
}

.right::before {
  border-left-color: #000;
  border-right: 0;
}

.splitter {
  flex: none;
  width: 104px;
  height: 4px;
  margin: 1px auto;
  background: radial-gradient(circle at 1px 1px, #bdbdbd 1px, transparent 1px) 0 0 / 5px 5px;
}

.splitter-v {
  flex: none;
  width: 3px;
  height: 273px;
  margin: auto 1px;
  background: radial-gradient(circle at 1px 1px, #bdbdbd 1px, transparent 1px) 0 0 / 5px 5px;
}

/* Coordinate capture */
.capture {
  display: grid;
  grid-template-columns: 30px 1fr;
  grid-template-rows: 30px 22px 30px 34px;
  gap: 15px 16px;
  align-items: center;
  height: 194px;
  padding: 16px 8px 0;
}

.capture input {
  width: 100%;
  height: 22px;
  padding: 0 4px;
  background: #fff;
  border: 1px solid #b4b4b4;
  border-radius: 2px;
}

.square {
  display: flex;
  align-items: center;
  justify-content: center;
  width: 30px;
  height: 29px;
  background: #f2f2f2;
  border: 1px solid #8c8c8c;
  border-radius: 3px;
}

.square svg,
.grid-icon svg {
  display: block;
  width: 22px;
  height: 22px;
}

.push {
  display: flex;
  align-items: center;
  justify-content: center;
  gap: 4px;
  height: 28px;
  background: linear-gradient(#f6f6f6, #ebebeb 45%, #dcdcdc 55%, #e0e0e0);
  border: 1px solid #b4b4b4;
  border-radius: 3px;
}

.push.tall {
  height: 31px;
}

.push svg {
  width: 20px;
  height: 20px;
}

/* Layers */
.layers {
  display: flex;
  flex-direction: column;
  flex: 1;
  min-height: 0;
}

.layers .panel-tools {
  height: 36px;
  padding: 4px 9px;
}

.layer-box {
  flex: 1;
  min-height: 0;
  background: #fff;
  border: 2px solid #58a6f2;
  border-top-width: 1px;
  border-radius: 2px;
}

.layer-tree {
  background: repeating-linear-gradient(#999 0 1px, #fff 1px 2px) 9px 0 / 1px 124px no-repeat #fff;
}

.layer-tree .selected {
  height: 20px;
  padding-left: 5px;
  color: #fff;
  background: #3399ff;
  font-size: 13px;
  font-weight: bold;
}

.layer-tree .selected label {
  flex: 1;
  height: 19px;
  line-height: 18px;
  padding-left: 2px;
  text-decoration: underline;
  border: 1px dotted #b07a3c;
}

.layer-tree .selected svg {
  width: 20px;
  height: 20px;
  margin: 0 3px 0 6px;
}

.layer-tree input {
  flex: none;
  width: 15px;
  height: 15px;
  appearance: none;
  border: 1px solid #b4b4b4;
  background:
    linear-gradient(45deg, transparent 38%, #000 38% 62%, transparent 62%) center / 11px 11px no-repeat,
    linear-gradient(-45deg, transparent 38%, #000 38% 62%, transparent 62%) center / 11px 11px no-repeat,
    #fff;
}

.layer-tree .class {
  padding-left: 29px;
  background: repeating-linear-gradient(#999 0 1px, #fff 1px 2px) 29px 0 / 1px 100% no-repeat;
}

.layer-tree .class i {
  width: 9px;
  margin: 0 4px 0 0;
}

.layer-tree .class em {
  width: 16px;
  height: 16px;
  margin-right: 6px;
}

.c0 { background: #1a9641; }
.c1 { background: #a6d96a; }
.c2 { background: #ffffc0; }
.c3 { background: #fdae61; }
.c4 { background: #d7191c; }

.layer-tree .layer {
  padding-left: 10px;
  font-size: 13px;
  font-weight: bold;
}

.layer-tree .layer b {
  width: 4px;
  margin: 0;
}

.layer-tree .layer svg {
  width: 16px;
  height: 16px;
  margin: 0 6px;
}

.tabs {
  display: flex;
  align-items: flex-start;
  height: 24px;
  margin-top: 1px;
  border-top: 1px solid #b4b4b4;
}

.tabs button {
  width: 107px;
  height: 20px;
  background: linear-gradient(#f4f4f4, #e9e9e9 50%, #dadada 55%, #e2e2e2);
  border: 1px solid #b4b4b4;
  border-top: 0;
  border-radius: 0 0 3px 3px;
}

.tabs .current {
  width: 66px;
  height: 23px;
  margin-top: -1px;
  background: #efefef;
}

/* Map view */
.map {
  position: relative;
  flex: 1;
  min-width: 0;
  margin: 1px 0 2px;
  background: #fff;
  border: 1px solid #b4b4b4;
  border-right: 0;
  border-radius: 3px 0 0 3px;
}

.boundaries,
#heatmap {
  position: absolute;
  inset: 0;
  width: 100%;
  height: 100%;
}

.boundaries path {
  fill: none;
  stroke: #000;
  stroke-width: 1.4px;
  stroke-linejoin: round;
  vector-effect: non-scaling-stroke;
}

#heatmap {
  object-fit: contain;
  image-rendering: pixelated;
}

svg text {
  font-family: "DejaVu Sans Condensed", "DejaVu Sans", sans-serif;
}

svg text.serif {
  font-family: "Liberation Serif", serif;
}
```
FILE: heatmap.js
```js
// x, y in map units, weight as a share of the top class
const points = [
  [1128, 279, 0.87], [1139, 333, 0.68],
  [1163, 405, 0.6], [1167, 437, 0.8],
  [1060, 410, 0.62], [982, 454, 1.08], [947, 508, 0.97],
  [1040, 523, 0.92], [923, 597, 0.54], [973, 642, 0.51],
  [1086, 599, 0.65], [1156, 636, 0.5], [1289, 653, 0.62],
  [1124, 717, 0.65], [1151, 738, 0.76], [1180, 700, 0.65],
  [1167, 755, 0.45], [1185, 811, 0.77], [1138, 794, 0.55],
  [1162, 795, 0.28], [997, 773, 0.51], [1055, 774, 1.65],
  [1088, 780, 0.7], [1221, 872, 0.78]
];

const ramp = [
  [26, 150, 65],
  [166, 217, 106],
  [255, 255, 192],
  [253, 174, 97],
  [215, 25, 28]
];

const radius = 45.4;
const cell = 1525 / 915;
const canvas = document.getElementById('heatmap');
const ctx = canvas.getContext('2d');
const image = ctx.createImageData(canvas.width, canvas.height);

function colourFor(value) {
  const t = Math.min(value, 1) * (ramp.length - 1);
  const i = Math.min(Math.floor(t), ramp.length - 2);
  return ramp[i].map((c, k) => c + (ramp[i + 1][k] - c) * (t - i));
}

for (let row = 0; row < canvas.height; row++) {
  for (let col = 0; col < canvas.width; col++) {
    const x = 391 + (col + 0.5) * cell;
    const y = 147 + (row + 0.5) * cell;
    let sum = 0;

    // quartic kernel
    for (const [px, py, weight] of points) {
      const d = ((x - px) ** 2 + (y - py) ** 2) / (radius * radius);
      if (d < 1) sum += weight * (1 - d) ** 2;
    }

    if (sum > 0) {
      const [r, g, b] = colourFor(sum);
      image.data.set([r, g, b, 255], (row * canvas.width + col) * 4);
    }
  }
}

ctx.putImageData(image, 0, 0);
```
